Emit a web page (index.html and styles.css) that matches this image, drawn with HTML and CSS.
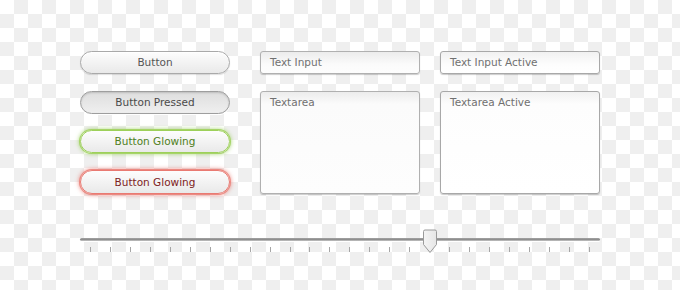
FILE: index.html
```html
<!DOCTYPE html>
<html lang="en">
<head>
    <meta charset="UTF-8">
    <title>UI Kit</title>
    <link rel="stylesheet" href="styles.css">
</head>
<body>
    <div class="kit">
        <div class="controls">
            <div class="buttons">
                <div class="btn">Button</div>
                <div class="btn pressed">Button Pressed</div>
                <div class="btn glow-green">Button Glowing</div>
                <div class="btn glow-red">Button Glowing</div>
            </div>
            <div class="fields">
                <div class="input">Text Input</div>
                <div class="input area">Textarea</div>
            </div>
            <div class="fields">
                <div class="input active">Text Input Active</div>
                <div class="input area active">Textarea Active</div>
            </div>
        </div>

        <div class="slider">
            <div class="track"></div>
            <svg class="thumb" width="16" height="25" viewBox="0 0 16 25">
                <defs>
                    <linearGradient id="tg" x1="0" y1="0" x2="1" y2="0">
                        <stop offset="0" stop-color="#f4f4f4"/>
                        <stop offset="1" stop-color="#e6e6e6"/>
                    </linearGradient>
                </defs>
                <path d="M1.5 2.5 Q1.5 1 3 1 H13 Q14.5 1 14.5 2.5 V15.5 L8 23.5 L1.5 15.5 Z" fill="url(#tg)" stroke="#9a9a9a" stroke-width="1"/>
            </svg>
            <div class="ticks">
                <span></span><span></span><span></span><span></span><span></span><span></span><span></span>
                <span></span><span></span><span></span><span></span><span></span><span></span><span></span>
                <span></span><span></span><span></span><span></span><span></span><span></span><span></span>
                <span></span><span></span><span></span><span></span><span></span>
            </div>
        </div>
    </div>
</body>
</html>
```

FILE: styles.css
```css
body {
    margin: 0;
    width: 680px;
    height: 290px;
    overflow: hidden;
    font-family: "DejaVu Sans", sans-serif;
    background: repeating-conic-gradient(#efefef 0 25%, #ffffff 0 50%) 0 0 / 28px 28px;
}

.kit {
    padding: 51px 0 0 80px;
}

.controls {
    display: flex;
    gap: 30px;
}

/* Botones */
.buttons {
    display: flex;
    flex-direction: column;
    gap: 17px;
    width: 150px;
}

.btn {
    height: 21px;
    line-height: 21px;
    border: 1px solid #a9a9a9;
    border-radius: 12px;
    text-align: center;
    font-size: 10.5px;
    color: #555;
    background: linear-gradient(to bottom, #fdfdfd, #e9e9e9);
    box-shadow: inset 0 1px 0 #fff, 0 1px 1px rgba(0, 0, 0, 0.12);
}

.btn.pressed {
    background: linear-gradient(to bottom, #dedede, #efefef);
    border-color: #9e9e9e;
    color: #4a4a4a;
    box-shadow: inset 0 1px 2px rgba(0, 0, 0, 0.15), 0 1px 0 #fff;
}

.btn.glow-green {
    margin-top: -1px;
    border-color: #9dd05a;
    color: #4f7f22;
    box-shadow: 0 0 0 1px #a6d468, 0 0 4px 1px rgba(140, 200, 70, 0.7);
}

.btn.glow-red {
    height: 22px;
    line-height: 22px;
    border-color: #e97a72;
    color: #7d2222;
    box-shadow: 0 0 0 1px #ec8a82, 0 0 4px 1px rgba(230, 100, 90, 0.7);
}

/* Campos */
.fields {
    display: flex;
    flex-direction: column;
    gap: 17px;
    width: 160px;
}

.fields + .fields {
    margin-left: -10px;
}

.input {
    height: 21px;
    line-height: 21px;
    padding-left: 9px;
    border: 1px solid #b0b0b0;
    border-radius: 3px;
    font-size: 10.5px;
    color: #707070;
    background: linear-gradient(to bottom, #ececec, #fbfbfb 60%, #fdfdfd);
    box-shadow: 0 1px 1px rgba(0, 0, 0, 0.2);
}

.input.area {
    height: 94px;
    line-height: 14px;
    padding-top: 3px;
    padding-bottom: 4px;
    background: linear-gradient(to bottom, #ececec, #fbfbfb 12px, #fdfdfd);
}

.input.active {
    border-color: #a8a8a8;
    background: linear-gradient(to bottom, #f1f1f1, #fdfdfd 60%, #ffffff);
}

.input.area.active {
    background: linear-gradient(to bottom, #f1f1f1, #fdfdfd 12px, #ffffff);
}

/* Slider */
.slider {
    position: relative;
    width: 520px;
    margin-top: 44px;
}

.track {
    height: 3px;
    margin-top: 11px;
    border-radius: 2px;
    background: linear-gradient(to bottom, #a4a4a4, #8e8e8e 50%, #c8c8c8);
    box-shadow: 0 1px 0 #fff;
}

.thumb {
    position: absolute;
    left: 342px;
    top: -9px;
}

.ticks {
    display: flex;
    justify-content: space-between;
    padding: 0 10px;
    margin-top: 6px;
}

.ticks span {
    width: 1px;
    height: 5px;
    background: #a6a6a6;
}
```
